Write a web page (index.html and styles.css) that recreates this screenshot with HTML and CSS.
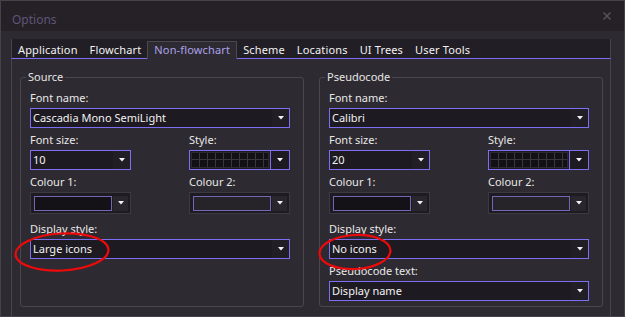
FILE: index.html
```html
<!DOCTYPE html>
<html lang="en">
<head>
    <meta charset="UTF-8">
    <meta name="viewport" content="width=device-width, initial-scale=1.0">
    <title>Options</title>
    <link rel="stylesheet" href="styles.css">
</head>
<body>
    <div class="window">
        <div class="titlebar">
            <span class="title">Options</span>
            <span class="close">
                <svg width="8" height="8" viewBox="0 0 8 8"><path d="M0.5 0.5L7.5 7.5M7.5 0.5L0.5 7.5" stroke="#59555e" stroke-width="1.4"/></svg>
            </span>
        </div>

        <div class="tabcontrol">
            <div class="tabstrip">
                <div class="tab">Application</div>
                <div class="tab">Flowchart</div>
                <div class="tab selected">Non-flowchart</div>
                <div class="tab">Scheme</div>
                <div class="tab">Locations</div>
                <div class="tab">UI Trees</div>
                <div class="tab">User Tools</div>
            </div>

            <div class="tabpage">
                <fieldset class="group">
                    <legend>Source</legend>
                    <div class="field">
                        <label>Font name:</label>
                        <div class="combo">
                            <span class="value">Cascadia Mono SemiLight</span>
                            <span class="drop"><svg width="6" height="4" viewBox="0 0 6 4"><polygon points="0,0 6,0 3,3.5" fill="#f2f2f2"/></svg></span>
                        </div>
                    </div>
                    <div class="pair">
                        <div class="field">
                            <label>Font size:</label>
                            <div class="combo">
                                <span class="value">10</span>
                                <span class="drop"><svg width="6" height="4" viewBox="0 0 6 4"><polygon points="0,0 6,0 3,3.5" fill="#f2f2f2"/></svg></span>
                            </div>
                        </div>
                        <div class="field">
                            <label>Style:</label>
                            <div class="combo style">
                                <span class="pattern"></span>
                                <span class="drop"><svg width="6" height="4" viewBox="0 0 6 4"><polygon points="0,0 6,0 3,3.5" fill="#f2f2f2"/></svg></span>
                            </div>
                        </div>
                    </div>
                    <div class="pair">
                        <div class="field">
                            <label>Colour 1:</label>
                            <div class="combo colour">
                                <span class="swatch dark"></span>
                                <span class="drop"><svg width="6" height="4" viewBox="0 0 6 4"><polygon points="0,0 6,0 3,3.5" fill="#f2f2f2"/></svg></span>
                            </div>
                        </div>
                        <div class="field">
                            <label>Colour 2:</label>
                            <div class="combo colour">
                                <span class="swatch grey"></span>
                                <span class="drop"><svg width="6" height="4" viewBox="0 0 6 4"><polygon points="0,0 6,0 3,3.5" fill="#f2f2f2"/></svg></span>
                            </div>
                        </div>
                    </div>
                    <div class="field display">
                        <label>Display style:</label>
                        <div class="combo-wrap">
                            <div class="combo">
                                <span class="value">Large icons</span>
                                <span class="drop"><svg width="6" height="4" viewBox="0 0 6 4"><polygon points="0,0 6,0 3,3.5" fill="#f2f2f2"/></svg></span>
                            </div>
                            <svg class="ring ring-large" width="98" height="42" viewBox="0 0 98 42"><ellipse cx="49" cy="21" rx="46.5" ry="18.5" transform="rotate(-3 49 21)" fill="none" stroke="#ee0a0a" stroke-width="2.2"/></svg>
                        </div>
                    </div>
                </fieldset>

                <fieldset class="group">
                    <legend>Pseudocode</legend>
                    <div class="field">
                        <label>Font name:</label>
                        <div class="combo">
                            <span class="value">Calibri</span>
                            <span class="drop"><svg width="6" height="4" viewBox="0 0 6 4"><polygon points="0,0 6,0 3,3.5" fill="#f2f2f2"/></svg></span>
                        </div>
                    </div>
                    <div class="pair">
                        <div class="field">
                            <label>Font size:</label>
                            <div class="combo">
                                <span class="value">20</span>
                                <span class="drop"><svg width="6" height="4" viewBox="0 0 6 4"><polygon points="0,0 6,0 3,3.5" fill="#f2f2f2"/></svg></span>
                            </div>
                        </div>
                        <div class="field">
                            <label>Style:</label>
                            <div class="combo style">
                                <span class="pattern"></span>
                                <span class="drop"><svg width="6" height="4" viewBox="0 0 6 4"><polygon points="0,0 6,0 3,3.5" fill="#f2f2f2"/></svg></span>
                            </div>
                        </div>
                    </div>
                    <div class="pair">
                        <div class="field">
                            <label>Colour 1:</label>
                            <div class="combo colour">
                                <span class="swatch dark"></span>
                                <span class="drop"><svg width="6" height="4" viewBox="0 0 6 4"><polygon points="0,0 6,0 3,3.5" fill="#f2f2f2"/></svg></span>
                            </div>
                        </div>
                        <div class="field">
                            <label>Colour 2:</label>
                            <div class="combo colour">
                                <span class="swatch grey"></span>
                                <span class="drop"><svg width="6" height="4" viewBox="0 0 6 4"><polygon points="0,0 6,0 3,3.5" fill="#f2f2f2"/></svg></span>
                            </div>
                        </div>
                    </div>
                    <div class="field display">
                        <label>Display style:</label>
                        <div class="combo-wrap">
                            <div class="combo">
                                <span class="value">No icons</span>
                                <span class="drop"><svg width="6" height="4" viewBox="0 0 6 4"><polygon points="0,0 6,0 3,3.5" fill="#f2f2f2"/></svg></span>
                            </div>
                            <svg class="ring ring-none" width="76" height="38" viewBox="0 0 76 38"><ellipse cx="38" cy="19" rx="35.5" ry="17" transform="rotate(-3 38 19)" fill="none" stroke="#ee0a0a" stroke-width="2.2"/></svg>
                        </div>
                    </div>
                    <div class="field">
                        <label>Pseudocode text:</label>
                        <div class="combo">
                            <span class="value">Display name</span>
                            <span class="drop"><svg width="6" height="4" viewBox="0 0 6 4"><polygon points="0,0 6,0 3,3.5" fill="#f2f2f2"/></svg></span>
                        </div>
                    </div>
                </fieldset>
            </div>
        </div>
    </div>
</body>
</html>
```

FILE: styles.css
```css
body {
    margin: 0;
    background-color: #2e2a31;
    font-family: "Noto Sans", "Open Sans", sans-serif;
    font-size: 11px;
    color: #ececec;
}
.window {
    width: 625px;
    height: 317px;
    box-sizing: border-box;
    border: 1px solid #46424b;
    overflow: hidden;
}
.titlebar {
    height: 30px;
    background-color: #252126;
    display: flex;
    align-items: center;
    padding-left: 11px;
    padding-right: 13px;
}
.title {
    color: #5e5579;
    font-size: 12px;
    margin-top: 6px;
}
.close {
    margin-left: auto;
    display: flex;
}
.tabcontrol {
    margin: 8px 0 0 10px;
    width: 600px;
}
.tabstrip {
    display: flex;
    align-items: flex-end;
    height: 19px;
    background-color: #221e25;
    border-left: 1px solid #48444c;
    border-right: 1px solid #48444c;
    border-bottom: 1px solid #7d6ff2;
}
.tab {
    line-height: 16px;
    padding: 0 6px;
    color: #f2f2f2;
    letter-spacing: 0.15px;
    white-space: nowrap;
}
.tab.selected {
    padding: 0 6px 1px;
    margin-bottom: -1px;
    border: 1px solid #4c4850;
    border-bottom: none;
    background-color: #2e2a31;
    color: #aaa2ea;
}
.tabpage {
    display: grid;
    grid-template-columns: 284px 284px;
    column-gap: 15px;
    padding: 10px 6px 0 8px;
    height: 300px;
    border-left: 1px solid #48444c;
    border-right: 1px solid #48444c;
}
.group {
    margin: 0;
    padding: 5px 13px 0 9px;
    height: 238px;
    box-sizing: border-box;
    border: 1px solid #4a464e;
    border-radius: 3px;
    min-width: 0;
}
.group legend {
    padding: 0 2px;
    margin-left: -4px;
    line-height: 16px;
    color: #e6e6e6;
}
.group > .field,
.group > .pair {
    margin-top: 4px;
}
.group > legend + .field {
    margin-top: 0;
}
.group > .display {
    margin-top: 7px;
}
.field label {
    display: block;
    line-height: 15px;
    color: #e8e8e8;
}
.pair {
    display: grid;
    grid-template-columns: 101px 101px;
    justify-content: space-between;
}
.combo {
    margin-top: 3px;
    height: 20px;
    box-sizing: border-box;
    border: 1px solid #7d6ff2;
    background-color: #1e1a21;
    display: flex;
    align-items: center;
    color: #f2f2f2;
}
.combo .value {
    padding-left: 2px;
    white-space: nowrap;
    line-height: 16px;
}
.drop {
    margin-left: auto;
    width: 17px;
    height: 100%;
    background-color: #221e25;
    display: flex;
    align-items: center;
    justify-content: center;
}
.combo.style .pattern {
    flex: 1;
    height: 16px;
    margin: 0 1px;
    box-sizing: border-box;
    border: 1px solid #2c292f;
    background-color: #131015;
    background-image:
        linear-gradient(to bottom, transparent 6px, #3a363d 6px, #3a363d 7px, transparent 7px),
        linear-gradient(to right, transparent 7px, #3a363d 7px);
    background-size: 100% 100%, 8px 100%;
}
.combo.style .drop {
    flex: none;
    margin-left: 0;
    width: 18px;
    border-left: 1px solid #7d6ff2;
    background-color: #1e1a21;
}
.combo.colour {
    height: 22px;
    border-color: #3d3941;
    background-color: #1f1b22;
}
.swatch {
    width: 78px;
    height: 15px;
    margin-left: 3px;
    box-sizing: border-box;
    border: 1px solid #7466b4;
}
.swatch.dark {
    background-color: #151217;
}
.swatch.grey {
    background-color: #262428;
}
.combo.colour .drop {
    width: 15px;
    height: 15px;
    margin-right: 2px;
    background-color: #2a262d;
}
.combo-wrap {
    position: relative;
}
.ring {
    position: absolute;
    pointer-events: none;
}
.ring-large {
    left: -17px;
    top: -8px;
}
.ring-none {
    left: -12px;
    top: -6px;
}
```
